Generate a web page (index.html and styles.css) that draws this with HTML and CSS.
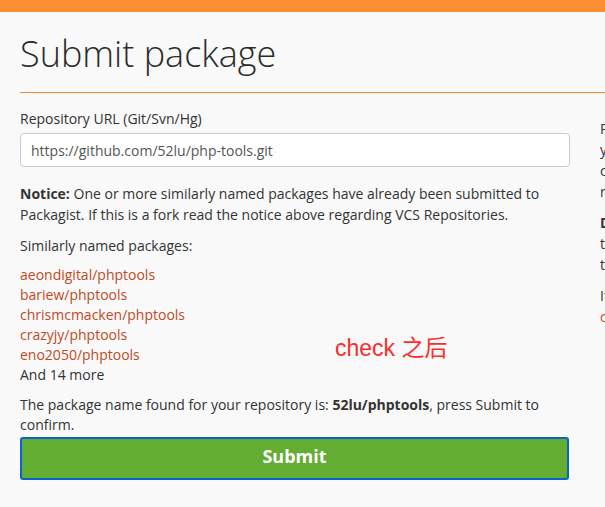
FILE: index.html
```html
<!DOCTYPE html>
<html lang="en">
<head>
<meta charset="utf-8">
<title>Submit package</title>
<link rel="stylesheet" href="styles.css">
</head>
<body>
<div class="topbar"></div>
<div class="page">
  <h1 class="title">Submit package</h1>
  <div class="row">
    <form class="main">
      <label class="label" for="repo">Repository URL (Git/Svn/Hg)</label>
      <input class="input" id="repo" type="text" value="https://github.com/52lu/php-tools.git">
      <p class="notice"><strong>Notice:</strong> One or more similarly named packages have already been submitted to Packagist. If this is a fork read the notice above regarding VCS Repositories.</p>
      <p class="similar">Similarly named packages:</p>
      <ul class="pkgs">
        <li><a href="#">aeondigital/phptools</a></li>
        <li><a href="#">bariew/phptools</a></li>
        <li><a href="#">chrismcmacken/phptools</a></li>
        <li><a href="#">crazyjy/phptools</a></li>
        <li><a href="#">eno2050/phptools</a></li>
        <li>And 14 more</li>
      </ul>
      <p class="found">The package name found for your repository is: <strong>52lu/phptools</strong>, press Submit to confirm.</p>
      <button class="submit" type="button">Submit</button>
      <span class="annotation">check 之后</span>
    </form>
    <aside class="side">
      <p>Please make sure you have read the package naming conventions<br>your package. The authoritative name of your package will be<br>composer.json file inside the master branch or trunk of your<br>repository, and it can not be changed after that.</p>
      <p><strong>Do not submit forks of existing packages.</strong> If you need<br>to test changes to a package that you forked to patch, use VCS<br>to go with your own fork instead.</p>
      <p>If you need help or if you have any questions please get in touch with the<br><a href="#">community</a>.</p>
    </aside>
  </div>
</div>
</body>
</html>
```
FILE: styles.css
```css
html, body {
  margin: 0;
  padding: 0;
}
body {
  background: #f9f9f9;
  color: #333;
  font-family: "Open Sans", "Noto Sans", sans-serif;
  font-size: 14px;
  line-height: 20px;
  overflow: hidden;
}
.topbar {
  height: 12px;
  background: #fc8e34;
}
.page {
  padding-left: 20px;
  overflow: hidden;
}
.title {
  margin: 22px 0 0;
  padding-bottom: 18px;
  border-bottom: 1px solid #f5892c;
  font-size: 36px;
  font-weight: 300;
  line-height: 40px;
  color: #2b2b2b;
  white-space: nowrap;
}
.row {
  display: grid;
  grid-template-columns: 550px 400px;
  column-gap: 30px;
}
.main {
  position: relative;
  display: flex;
  flex-direction: column;
  padding-top: 16px;
}
.label {
  display: block;
  margin-bottom: 4px;
}
.input {
  box-sizing: border-box;
  height: 34px;
  width: 100%;
  margin: 0;
  padding: 6px 10px;
  border: 1px solid #ccc;
  border-radius: 4px;
  background: #fff;
  color: #555;
  font: inherit;
}
.notice {
  margin: 16px 0 0;
  line-height: 21px;
}
.similar {
  margin: 11px 0 0;
}
.pkgs {
  list-style: none;
  margin: 9px 0 0;
  padding: 0;
}
.pkgs a {
  color: #bf4a24;
  text-decoration: none;
}
.found {
  margin: 10px 0 0;
}
.submit {
  box-sizing: border-box;
  width: 549px;
  height: 43px;
  margin-top: 2px;
  padding: 0 0 5px;
  border: 2px solid #0a63c9;
  border-radius: 3px;
  background: #62ad32;
  color: #fff;
  font-family: "Open Sans", "Noto Sans", sans-serif;
  font-size: 18px;
  font-weight: 700;
  cursor: pointer;
}
.annotation {
  position: absolute;
  left: 315px;
  top: 242px;
  color: #fd2b2b;
  font-family: "Liberation Sans", Arial, "Noto Sans CJK SC", sans-serif;
  font-size: 23px;
  line-height: 26px;
}
.side {
  padding-top: 25px;
  line-height: 21px;
  white-space: nowrap;
}
.side p {
  margin: 0 0 10px;
}
.side a {
  color: #bf4a24;
  text-decoration: none;
}
```
